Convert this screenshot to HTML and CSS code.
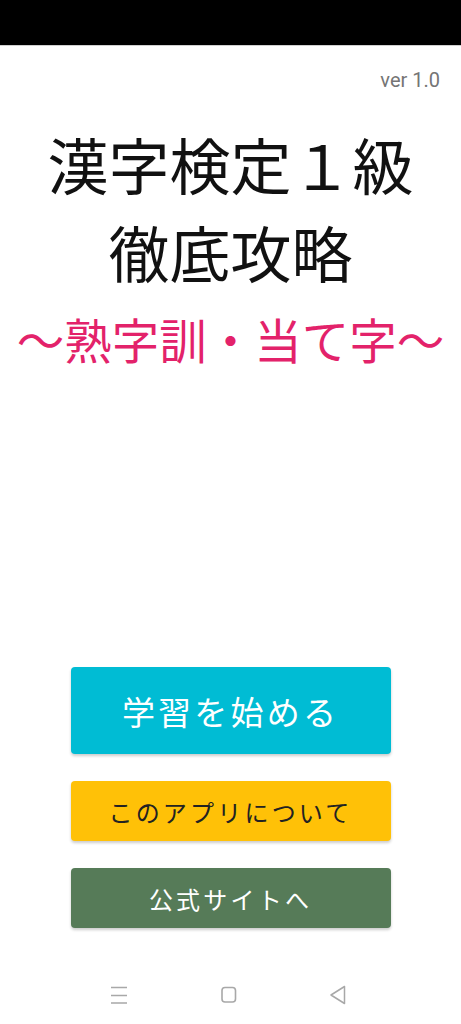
FILE: index.html
```html
<!DOCTYPE html>
<html lang="ja">
<head>
<meta charset="utf-8">
<title>漢字検定１級 徹底攻略</title>
<link rel="stylesheet" href="styles.css">
</head>
<body>
<div class="screen">
  <div class="status-bar"></div>
  <main class="main">
    <div class="version">ver 1.0</div>
    <h1 class="title">漢字検定１級<br>徹底攻略</h1>
    <p class="subtitle">〜熟字訓・当て字〜</p>
    <div class="buttons">
      <button class="btn btn-start">学習を始める</button>
      <button class="btn btn-about">このアプリについて</button>
      <button class="btn btn-site">公式サイトへ</button>
    </div>
  </main>
  <nav class="nav-bar">
    <svg class="nav-icon" width="18" height="18" viewBox="0 0 18 18"><path d="M1 1.5H17M1 9.5H17M1 17H17" stroke="#a8a8a8" stroke-width="1.6" fill="none"/></svg>
    <svg class="nav-icon" width="18" height="18" viewBox="0 0 18 18"><rect x="2" y="1.5" width="13.5" height="14.5" rx="3" stroke="#a8a8a8" stroke-width="1.6" fill="none"/></svg>
    <svg class="nav-icon" width="18" height="20" viewBox="0 0 18 20"><path d="M15.5 1.5V18.5L2 10Z" stroke="#a8a8a8" stroke-width="1.5" stroke-linejoin="round" fill="none"/></svg>
  </nav>
</div>
</body>
</html>
```
FILE: styles.css
```css
html, body {
  margin: 0;
  padding: 0;
  background: #ffffff;
}

.screen {
  width: 461px;
  height: 1024px;
  display: flex;
  flex-direction: column;
  font-family: "Noto Sans CJK JP", "Noto Sans", sans-serif;
  overflow: hidden;
}

.status-bar {
  height: 46px;
  background: #000000;
  flex: none;
  border-bottom: 1px solid #cfcfcf;
  box-sizing: border-box;
}

.main {
  flex: 1;
  display: flex;
  flex-direction: column;
  align-items: center;
  padding-bottom: 38px;
}

.version {
  align-self: flex-end;
  margin: 23px 21px 0 0;
  font-family: Roboto, "Liberation Sans", sans-serif;
  font-size: 20px;
  line-height: 23px;
  color: #757575;
}

.title {
  margin: 28px 0 0;
  font-size: 61px;
  font-weight: 400;
  line-height: 88px;
  color: #111111;
  text-align: center;
}

.subtitle {
  margin: 10px 0 0;
  font-size: 47.5px;
  line-height: 66px;
  color: #e3226a;
  text-align: center;
  white-space: nowrap;
}

.buttons {
  margin-top: auto;
  display: flex;
  flex-direction: column;
  gap: 27px;
}

.btn {
  width: 320px;
  height: 60px;
  border: none;
  border-radius: 4px;
  font-family: "Noto Sans CJK JP", "Noto Sans", sans-serif;
  font-size: 24px;
  letter-spacing: 3.2px;
  box-shadow: 0 2px 3px rgba(0, 0, 0, 0.2);
  padding: 0;
}

.btn-start {
  height: 87px;
  background: #00bcd4;
  color: #ffffff;
  font-size: 33px;
}

.btn-about {
  background: #ffc107;
  color: #222222;
}

.btn-site {
  background: #567b58;
  color: #ffffff;
}

.nav-bar {
  height: 58px;
  flex: none;
  display: flex;
  justify-content: space-between;
  align-items: center;
  padding: 0 114px 0 110px;
  background: #ffffff;
}

.nav-icon {
  display: block;
}
```
